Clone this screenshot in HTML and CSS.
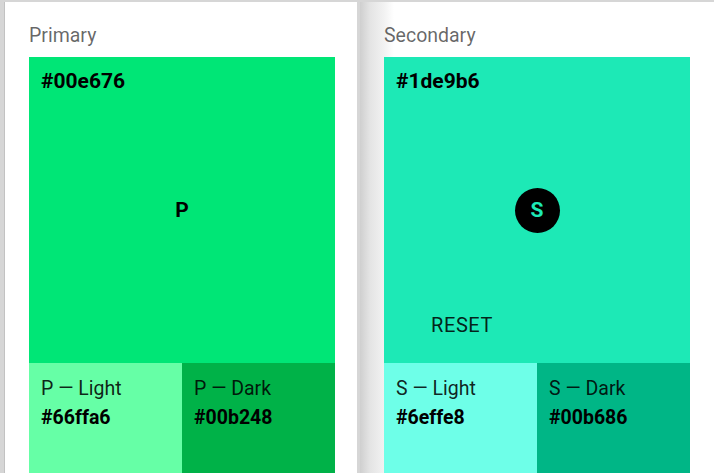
FILE: index.html
```html
<!DOCTYPE html>
<html lang="en">
<head>
<meta charset="utf-8">
<title>Palette</title>
<link rel="stylesheet" href="styles.css">
</head>
<body>
<div class="board">
  <section class="card card-primary">
    <h2 class="title">Primary</h2>
    <div class="palette">
      <div class="main main-primary">
        <span class="hex">#00e676</span>
        <span class="glyph">P</span>
      </div>
      <div class="variants">
        <div class="variant p-light">
          <span class="vname">P — Light</span>
          <span class="vhex">#66ffa6</span>
        </div>
        <div class="variant p-dark">
          <span class="vname">P — Dark</span>
          <span class="vhex">#00b248</span>
        </div>
      </div>
    </div>
  </section>
  <section class="card card-secondary">
    <h2 class="title">Secondary</h2>
    <div class="palette">
      <div class="main main-secondary">
        <span class="hex">#1de9b6</span>
        <span class="badge">S</span>
        <span class="reset">RESET</span>
      </div>
      <div class="variants">
        <div class="variant s-light">
          <span class="vname">S — Light</span>
          <span class="vhex">#6effe8</span>
        </div>
        <div class="variant s-dark">
          <span class="vname">S — Dark</span>
          <span class="vhex">#00b686</span>
        </div>
      </div>
    </div>
  </section>
</div>
</body>
</html>
```

FILE: styles.css
```css
* { box-sizing: border-box; }

html, body {
  margin: 0;
  padding: 0;
  height: 100%;
  overflow: hidden;
}

body {
  background: #e4e4e4;
  font-family: Roboto, "Noto Sans", "Liberation Sans", sans-serif;
  color: rgba(0, 0, 0, 0.87);
}

.board {
  display: flex;
  gap: 3px;
  padding: 2px 0 0 4px;
  background: #d6d6d6;
  min-height: 100%;
}

.card {
  flex: none;
  background: #fff;
  padding: 22px 22px 0 24px;
  border-left: 1px solid #c2c2c2;
  height: 520px;
}

.card-primary { width: 353px; }

.card-secondary {
  width: 360px;
  border-left: none;
  background: linear-gradient(to right, #cfcfcf 0, #e4e4e4 10px, #f2f2f2 24px, #ffffff 34px);
}

.title {
  margin: 0 0 9px 0;
  font-size: 19.5px;
  line-height: 24px;
  font-weight: 400;
  color: rgba(0, 0, 0, 0.6);
}

.palette {
  width: 306px;
}

.main {
  height: 306px;
  display: grid;
  grid-template-columns: 1fr;
  grid-template-rows: 1fr;
  color: #000;
}

.main > * {
  grid-area: 1 / 1;
}

.main-primary { background: #00e676; }
.main-secondary { background: #1de9b6; }

.hex {
  align-self: start;
  justify-self: start;
  padding: 12px;
  font-size: 21px;
  line-height: 24px;
  font-weight: 700;
}

.glyph {
  align-self: center;
  justify-self: center;
  font-size: 21px;
  font-weight: 700;
  line-height: 24px;
}

.badge {
  align-self: center;
  justify-self: center;
  width: 45px;
  height: 45px;
  border-radius: 50%;
  background: #000;
  color: #1de9b6;
  display: flex;
  align-items: center;
  justify-content: center;
  font-size: 21px;
  font-weight: 700;
}

.reset {
  align-self: end;
  justify-self: start;
  margin: 0 0 26px 47px;
  font-size: 20px;
  line-height: 24px;
  letter-spacing: 0.6px;
  font-weight: 400;
  color: rgba(0, 0, 0, 0.87);
}

.variants {
  display: grid;
  grid-template-columns: 1fr 1fr;
  height: 150px;
}

.variant {
  display: flex;
  flex-direction: column;
  gap: 5px;
  padding: 14px 12px;
  color: rgba(0, 0, 0, 0.87);
}

.vname {
  font-size: 19.5px;
  line-height: 24px;
  font-weight: 400;
}

.vhex {
  font-size: 19.5px;
  line-height: 24px;
  font-weight: 700;
  color: #000;
}

.p-light { background: #66ffa6; }
.p-dark { background: #00b248; }
.s-light { background: #6effe8; }
.s-dark { background: #00b686; }
```
